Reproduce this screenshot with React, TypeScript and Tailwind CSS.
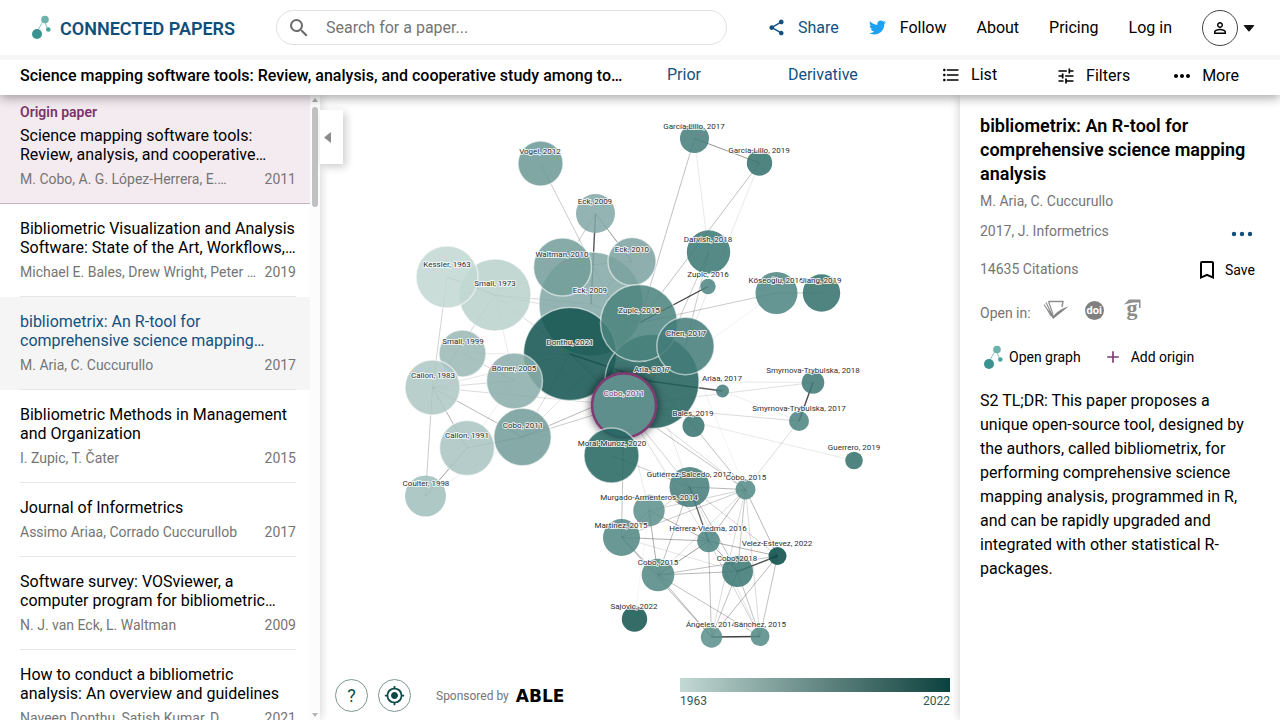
import React from "react";
import {
  MdSearch,
  MdShare,
  MdPersonOutline,
  MdFormatListBulleted,
  MdTune,
  MdMoreHoriz,
  MdBookmarkBorder,
  MdMyLocation,
  MdAdd,
} from "react-icons/md";
import { FaTwitter } from "react-icons/fa";

type Paper = { title: string; authors: string; year: number; hovered?: boolean };

const papers: Paper[] = [
  {
    title: "Bibliometric Visualization and Analysis Software: State of the Art, Workflows,…",
    authors: "Michael E. Bales, Drew Wright, Peter …",
    year: 2019,
  },
  {
    title: "bibliometrix: An R-tool for comprehensive science mapping…",
    authors: "M. Aria, C. Cuccurullo",
    year: 2017,
    hovered: true,
  },
  { title: "Bibliometric Methods in Management and Organization", authors: "I. Zupic, T. Čater", year: 2015 },
  { title: "Journal of Informetrics", authors: "Assimo Ariaa, Corrado Cuccurullob", year: 2017 },
  {
    title: "Software survey: VOSviewer, a computer program for bibliometric…",
    authors: "N. J. van Eck, L. Waltman",
    year: 2009,
  },
  {
    title: "How to conduct a bibliometric analysis: An overview and guidelines",
    authors: "Naveen Donthu, Satish Kumar, D…",
    year: 2021,
  },
];

type Node = {
  id: string;
  label: string;
  x: number;
  y: number;
  r: number;
  fill: string;
  lx: number;
  ly: number;
  origin?: boolean;
};

const nodes: Node[] = [
  { id: "small73", label: "Small, 1973", x: 495, y: 295, r: 36, fill: "#b9d0cc", lx: 495, ly: 286 },
  { id: "kessler", label: "Kessler, 1963", x: 447, y: 277, r: 31, fill: "#c1d7d3", lx: 447, ly: 267 },
  { id: "eckBig", label: "Eck, 2009", x: 591, y: 304, r: 52, fill: "#82a8a6", lx: 590, ly: 293 },
  { id: "eck09", label: "Eck, 2009", x: 595.5, y: 213.5, r: 19.5, fill: "#82a8a6", lx: 595, ly: 204 },
  { id: "waltman", label: "Waltman, 2010", x: 562.5, y: 267, r: 29, fill: "#729d9a", lx: 562, ly: 257 },
  { id: "eck10", label: "Eck, 2010", x: 632, y: 261.5, r: 24, fill: "#7ba29f", lx: 632, ly: 252 },
  { id: "vogel", label: "Vogel, 2012", x: 540.5, y: 163.5, r: 22.5, fill: "#6b9895", lx: 540, ly: 154 },
  { id: "gl17", label: "García-Lillo, 2017", x: 694.5, y: 138.5, r: 14.5, fill: "#437d79", lx: 694, ly: 129 },
  { id: "gl19", label: "García-Lillo, 2019", x: 759.5, y: 163, r: 12.7, fill: "#32706c", lx: 759, ly: 153 },
  { id: "darvish", label: "Darvish, 2018", x: 708.5, y: 252, r: 21.7, fill: "#3a7773", lx: 708, ly: 242 },
  { id: "zupic16", label: "Zupic, 2016", x: 708, y: 286.5, r: 7.7, fill: "#4c8581", lx: 708, ly: 277 },
  { id: "koseoglu", label: "Köseoğlu, 2016", x: 776.5, y: 293, r: 21, fill: "#4c8581", lx: 776, ly: 283 },
  { id: "jiang", label: "Jiang, 2019", x: 821.5, y: 293, r: 18.7, fill: "#32706c", lx: 821, ly: 283 },
  { id: "donthu", label: "Donthu, 2021", x: 570, y: 354, r: 46.5, fill: "#11534f", lx: 570, ly: 345 },
  { id: "aria", label: "Aria, 2017", x: 652, y: 381.5, r: 47, fill: "#1f605b", lx: 652, ly: 372 },
  { id: "zupic15", label: "Zupic, 2015", x: 639, y: 323, r: 38.5, fill: "#4a827e", lx: 639, ly: 313 },
  { id: "chen", label: "Chen, 2017", x: 685.5, y: 346, r: 28.7, fill: "#427c78", lx: 686, ly: 336 },
  { id: "small99", label: "Small, 1999", x: 462.5, y: 353.5, r: 23.5, fill: "#98b8b5", lx: 463, ly: 344 },
  { id: "callon83", label: "Callon, 1983", x: 432.5, y: 387.5, r: 27.5, fill: "#adc7c4", lx: 433, ly: 378 },
  { id: "borner", label: "Börner, 2005", x: 514.5, y: 381, r: 28, fill: "#89adaa", lx: 514, ly: 371 },
  { id: "cobo11", label: "Cobo, 2011", x: 522.5, y: 437, r: 28.7, fill: "#719c99", lx: 523, ly: 428 },
  { id: "callon91", label: "Callon, 1991", x: 467, y: 448, r: 27.5, fill: "#a9c4c1", lx: 467, ly: 438 },
  { id: "coulter", label: "Coulter, 1998", x: 425.5, y: 496, r: 20.5, fill: "#a1bfbc", lx: 426, ly: 486 },
  { id: "origin", label: "Cobo, 2011", x: 624, y: 405.5, r: 32, fill: "#5f8f8c", lx: 624, ly: 396, origin: true },
  { id: "moral", label: "Moral-Munoz, 2020", x: 611.5, y: 455.5, r: 27.5, fill: "#23645f", lx: 612, ly: 446 },
  { id: "ariaa", label: "Ariaa, 2017", x: 722.5, y: 391, r: 6.5, fill: "#437d79", lx: 722, ly: 381 },
  { id: "smyr18", label: "Smyrnova-Trybulska, 2018", x: 813, y: 382.5, r: 11.3, fill: "#3d7874", lx: 813, ly: 373 },
  { id: "smyr17", label: "Smyrnova-Trybulska, 2017", x: 799, y: 421, r: 10, fill: "#4a827e", lx: 799, ly: 411 },
  { id: "bales", label: "Bales, 2019", x: 693.5, y: 426, r: 11, fill: "#35726e", lx: 693, ly: 416 },
  { id: "guerrero", label: "Guerrero, 2019", x: 854, y: 460.5, r: 8.8, fill: "#32706c", lx: 854, ly: 450 },
  { id: "gutierrez", label: "Gutiérrez-Salcedo, 2017", x: 689.5, y: 487, r: 20, fill: "#437d79", lx: 689, ly: 477 },
  { id: "cobo15", label: "Cobo, 2015", x: 745.5, y: 489.5, r: 10, fill: "#548a86", lx: 746, ly: 480 },
  { id: "murgado", label: "Murgado-Armenteros, 2014", x: 649, y: 510.5, r: 15.7, fill: "#5b8f8b", lx: 649, ly: 500 },
  { id: "martinez", label: "Martínez, 2015", x: 621.5, y: 537.5, r: 18.5, fill: "#528884", lx: 621, ly: 528 },
  { id: "herrera", label: "Herrera-Viedma, 2016", x: 708.5, y: 541, r: 11.3, fill: "#4c8581", lx: 708, ly: 531 },
  { id: "cobo18", label: "Cobo, 2018", x: 737.5, y: 571.5, r: 15.5, fill: "#3a7773", lx: 737, ly: 561 },
  { id: "velez", label: "Velez-Estevez, 2022", x: 777.5, y: 556, r: 9, fill: "#074a46", lx: 777, ly: 546 },
  { id: "cobo15b", label: "Cobo, 2015", x: 658, y: 575, r: 16.3, fill: "#528884", lx: 658, ly: 565 },
  { id: "angeles", label: "Ángeles, 2014", x: 711.5, y: 637, r: 10.7, fill: "#5b8f8b", lx: 711, ly: 627 },
  { id: "sanchez", label: "Sánchez, 2015", x: 760, y: 636.5, r: 9.5, fill: "#548a86", lx: 760, ly: 627 },
  { id: "sajovic", label: "Sajovic, 2022", x: 634.5, y: 619, r: 12.7, fill: "#14544f", lx: 634, ly: 609 },
];

const byId: Record<string, Node> = Object.fromEntries(nodes.map((n) => [n.id, n]));

// [source, target, similarity between 0 and 1]
const edges: [string, string, number][] = [
  ["vogel", "aria", 0.3],
  ["eck09", "eckBig", 0.85],
  ["eck09", "eck10", 0.6],
  ["eck09", "waltman", 0.3],
  ["waltman", "eck10", 0.4],
  ["eckBig", "eck10", 0.3],
  ["eckBig", "zupic15", 0.4],
  ["kessler", "small73", 0.5],
  ["kessler", "callon83", 0.25],
  ["small73", "callon83", 0.25],
  ["small73", "eckBig", 0.25],
  ["small73", "zupic15", 0.2],
  ["small73", "borner", 0.12],
  ["small73", "donthu", 0.2],
  ["small99", "borner", 0.25],
  ["small99", "donthu", 0.12],
  ["callon83", "borner", 0.2],
  ["callon83", "origin", 0.2],
  ["callon83", "cobo11", 0.4],
  ["callon83", "callon91", 0.45],
  ["callon83", "coulter", 0.3],
  ["callon83", "donthu", 0.15],
  ["callon91", "coulter", 0.55],
  ["callon91", "cobo11", 0.4],
  ["coulter", "cobo11", 0.1],
  ["callon91", "borner", 0.1],
  ["cobo11", "aria", 0.4],
  ["cobo11", "origin", 0.3],
  ["cobo11", "donthu", 0.2],
  ["cobo11", "zupic15", 0.15],
  ["donthu", "aria", 0.8],
  ["donthu", "origin", 0.4],
  ["gl17", "gl19", 0.6],
  ["gl17", "zupic15", 0.35],
  ["gl17", "darvish", 0.12],
  ["gl19", "zupic15", 0.35],
  ["gl19", "chen", 0.12],
  ["darvish", "chen", 0.3],
  ["darvish", "aria", 0.3],
  ["zupic16", "zupic15", 0.95],
  ["koseoglu", "zupic15", 0.3],
  ["koseoglu", "jiang", 0.3],
  ["koseoglu", "aria", 0.08],
  ["aria", "ariaa", 0.85],
  ["aria", "smyr18", 0.12],
  ["origin", "smyr18", 0.18],
  ["ariaa", "smyr17", 0.1],
  ["origin", "smyr17", 0.2],
  ["smyr18", "smyr17", 0.9],
  ["smyr17", "cobo15", 0.2],
  ["origin", "guerrero", 0.12],
  ["aria", "bales", 0.25],
  ["bales", "cobo15", 0.35],
  ["chen", "cobo15", 0.07],
  ["origin", "cobo15", 0.35],
  ["donthu", "cobo15", 0.2],
  ["origin", "gutierrez", 0.25],
  ["aria", "gutierrez", 0.12],
  ["moral", "gutierrez", 0.3],
  ["origin", "martinez", 0.35],
  ["origin", "murgado", 0.12],
  ["origin", "herrera", 0.2],
  ["gutierrez", "cobo15", 0.4],
  ["gutierrez", "herrera", 0.75],
  ["gutierrez", "martinez", 0.25],
  ["gutierrez", "cobo15b", 0.35],
  ["gutierrez", "velez", 0.25],
  ["gutierrez", "cobo18", 0.35],
  ["gutierrez", "sanchez", 0.15],
  ["cobo15", "murgado", 0.25],
  ["cobo15", "martinez", 0.3],
  ["cobo15", "herrera", 0.4],
  ["cobo15", "cobo18", 0.35],
  ["cobo15", "velez", 0.4],
  ["cobo15", "cobo15b", 0.2],
  ["cobo15", "angeles", 0.2],
  ["cobo15", "sanchez", 0.2],
  ["murgado", "herrera", 0.45],
  ["murgado", "martinez", 0.4],
  ["murgado", "cobo15b", 0.45],
  ["martinez", "herrera", 0.45],
  ["martinez", "cobo18", 0.15],
  ["martinez", "cobo15b", 0.45],
  ["martinez", "angeles", 0.4],
  ["herrera", "cobo15b", 0.55],
  ["herrera", "cobo18", 0.45],
  ["herrera", "velez", 0.45],
  ["herrera", "angeles", 0.35],
  ["herrera", "sanchez", 0.25],
  ["cobo18", "velez", 0.85],
  ["cobo18", "cobo15b", 0.4],
  ["cobo18", "angeles", 0.35],
  ["cobo18", "sanchez", 0.35],
  ["velez", "cobo15b", 0.35],
  ["velez", "angeles", 0.4],
  ["velez", "sanchez", 0.35],
  ["cobo15b", "angeles", 0.4],
  ["cobo15b", "sanchez", 0.35],
  ["angeles", "sanchez", 0.95],
  ["murgado", "sajovic", 0.06],
];

function GraphLogo() {
  return (
    <svg viewBox="0 0 20 25" className="h-[25px] w-5 shrink-0" aria-hidden="true">
      <path d="M5 18.500 13 4.500 17 15" fill="none" stroke="#6fb3ae" strokeWidth="0.8" />
      <circle cx="6" cy="19" r="5" fill="#3a9391" />
      <circle cx="14" cy="4.500" r="3.800" fill="#6bb3ac" />
      <circle cx="17.300" cy="14.500" r="2.300" fill="#4aa39e" />
    </svg>
  );
}

function Header() {
  return (
    <header className="relative z-30 flex h-[55px] shrink-0 items-center bg-white shadow-[0_5px_0_#f6f6f6]">
      <a href="#home" className="ml-[31px] flex items-center gap-[9px] text-lg font-semibold text-[#0f4f7a]">
        <GraphLogo />
        <span className="whitespace-nowrap pt-0.5">CONNECTED PAPERS</span>
      </a>
      <label className="ml-[41px] flex h-[35px] flex-1 items-center gap-[15px] rounded-full border border-[#e0e0e0] px-2.5">
        <MdSearch className="size-6 shrink-0 text-[#6b6b6b]" />
        <input
          type="search"
          aria-label="Search for a paper"
          placeholder="Search for a paper..."
          className="w-full bg-transparent text-base outline-none placeholder:text-[#757575]"
        />
      </label>
      <nav className="ml-10 flex items-center gap-[30px] text-base">
        <a href="#share" className="flex items-center gap-3 text-[#125180]">
          <MdShare className="size-[19px]" />
          Share
        </a>
        <a href="#follow" className="flex items-center gap-3.5">
          <FaTwitter className="size-[17px] text-[#1da1f2]" />
          Follow
        </a>
        <a href="#about">About</a>
        <a href="#pricing">Pricing</a>
        <a href="#login" className="whitespace-nowrap">Log in</a>
        <button type="button" aria-label="Account" className="mr-[25px] flex items-center gap-[5px]">
          <span className="flex size-9 items-center justify-center rounded-full border border-[#444]">
            <MdPersonOutline className="size-[18px]" />
          </span>
          <svg viewBox="0 0 12 7" className="mt-0.5 h-[7px] w-3" aria-hidden="true">
            <path d="M1.200 0.500h9.600l-4.800 5.800z" fill="#111" stroke="#111" strokeLinejoin="round" />
          </svg>
        </button>
      </nav>
    </header>
  );
}

function Toolbar() {
  return (
    <div className="relative z-20 flex h-10 shrink-0 items-center bg-white px-5 text-base shadow-[0_3px_10px_rgba(0,0,0,0.35)]">
      <h1 className="w-[605px] truncate pt-0.5 font-medium">
        Science mapping software tools: Review, analysis, and cooperative study among to…
      </h1>
      <div className="ml-[42px] flex flex-1 gap-[87px] text-[#125180]">
        <button type="button">Prior</button>
        <button type="button">Derivative</button>
      </div>
      <div className="flex items-center">
        <button type="button" className="flex items-center gap-2.5">
          <MdFormatListBulleted className="size-5" />
          List
        </button>
        <button type="button" className="ml-[59px] flex items-center gap-2.5 pt-0.5">
          <MdTune className="size-5" />
          Filters
        </button>
        <button type="button" className="mr-[21px] ml-10 flex items-center gap-2 pt-0.5">
          <MdMoreHoriz className="size-6" />
          More
        </button>
      </div>
    </div>
  );
}

function Byline({ authors, year }: { authors: string; year: number }) {
  return (
    <div className="mt-[5px] flex justify-between text-sm text-[#757575]">
      <span className="truncate">{authors}</span>
      <span>{year}</span>
    </div>
  );
}

function PaperList() {
  return (
    <aside className="relative z-10 flex w-80 shrink-0 bg-white shadow-[0_0_10px_rgba(0,0,0,0.2)]">
      <ul className="w-[310px] overflow-hidden">
        <li className="border-b border-[#c9b4c1] bg-[#f3ebf0] pt-[7px] pr-3.5 pb-3.5 pl-5">
          <p className="text-sm font-semibold text-[#7a3568]">Origin paper</p>
          <h2 className="mt-1 text-base leading-[19px]">
            Science mapping software tools: Review, analysis, and cooperative…
          </h2>
          <Byline authors="M. Cobo, A. G. López-Herrera, E.…" year={2011} />
        </li>
        {papers.map((p) => (
          <li key={p.title} className={p.hovered ? "bg-[#f5f5f5] pr-3.5 pl-5" : "pr-3.5 pl-5"}>
            <div className="border-b border-[#e6e6e6] pt-[15px] pb-3.5">
              <h2 className={p.hovered ? "text-base leading-[19px] text-[#125180]" : "text-base leading-[19px]"}>
                {p.title}
              </h2>
              <Byline authors={p.authors} year={p.year} />
            </div>
          </li>
        ))}
      </ul>
      <div className="flex w-2.5 flex-col items-center justify-between bg-[#fcfcfc] py-[3px]" aria-hidden="true">
        <div className="flex flex-col items-center gap-[5px]">
          <svg viewBox="0 0 6 4" className="h-1 w-1.5">
            <path d="M0 4 3 0l3 4z" fill="#a9a9a9" />
          </svg>
          <div className="h-[100px] w-1.5 rounded-full bg-[#c1c1c1]" />
        </div>
        <svg viewBox="0 0 6 4" className="h-1 w-1.5">
          <path d="M0 0h6L3 4z" fill="#b5b5b5" />
        </svg>
      </div>
      <button
        type="button"
        aria-label="Collapse list"
        className="absolute top-[15px] left-full flex h-[54px] w-[23px] items-center bg-white pl-1 shadow-[3px_3px_8px_rgba(0,0,0,0.2)]"
      >
        <svg viewBox="0 0 7 11" className="h-[11px] w-[7px]" aria-hidden="true">
          <path d="M7 0v11L0 5.500z" fill="#8a8a8a" />
        </svg>
      </button>
    </aside>
  );
}

function Graph() {
  return (
    <svg viewBox="320 95 640 575" className="min-h-0 w-full flex-1" role="img" aria-label="Graph of related papers">
      <defs>
        <filter id="glow" x="-30%" y="-30%" width="160%" height="160%">
          <feDropShadow dx="0" dy="0" stdDeviation="5" floodColor="#000" floodOpacity="0.7" />
        </filter>
      </defs>
      {edges.map(([a, b, w]) => (
        <line
          key={a + b}
          x1={byId[a].x}
          y1={byId[a].y}
          x2={byId[b].x}
          y2={byId[b].y}
          stroke="#222"
          strokeOpacity={w * 0.9}
          strokeWidth={w > 0.7 ? 1.4 : 0.9}
        />
      ))}
      {nodes.map((n) => (
        <circle
          key={n.id}
          cx={n.x}
          cy={n.y}
          r={n.r}
          fill={n.fill}
          fillOpacity={n.origin ? 1 : 0.86}
          stroke={n.origin ? "#7f3b72" : "#fff"}
          strokeOpacity={n.origin ? 1 : 0.55}
          strokeWidth={n.origin ? 2.5 : n.r > 22 ? 1.5 : 0}
          filter={n.origin ? "url(#glow)" : undefined}
        />
      ))}
      {nodes.map((n) => (
        <text
          key={n.id}
          x={n.lx}
          y={n.ly}
          textAnchor="middle"
          className="text-[8px]"
          fill={n.origin ? "#7f3b72" : "#2f2f2f"}
          stroke="#fff"
          strokeOpacity={0.8}
          strokeWidth={2}
          strokeLinejoin="round"
          paintOrder="stroke"
        >
          {n.label}
        </text>
      ))}
    </svg>
  );
}

function GraphPane() {
  return (
    <main className="flex min-w-0 flex-1 flex-col bg-white">
      <Graph />
      <div className="flex h-[50px] shrink-0 items-start justify-between pr-2.5 pl-[15px]">
        <div className="flex items-center pt-[9px] text-[#0d4a47]">
          <button
            type="button"
            className="flex size-[33px] items-center justify-center rounded-full border border-[#7d9694] text-lg"
          >
            ?
          </button>
          <button
            type="button"
            aria-label="Center graph"
            className="ml-2.5 flex size-[33px] items-center justify-center rounded-full border border-[#7d9694]"
          >
            <MdMyLocation className="size-[21px]" />
          </button>
          <span className="ml-[25px] text-xs text-[#757575]">Sponsored by</span>
          <a
            href="#sponsor"
            className="ml-[7px] font-['DejaVu_Sans',sans-serif] text-[17px] leading-6 font-bold text-black"
          >
            ABLE
          </a>
        </div>
        <div className="w-[270px] pt-2 text-xs text-[#2c5a57]">
          <div className="h-3.5 bg-linear-to-r from-[#c3d9d4] to-[#07423f]" />
          <div className="flex justify-between pt-px">
            <span>1963</span>
            <span>2022</span>
          </div>
        </div>
      </div>
    </main>
  );
}

function DetailPane() {
  return (
    <section className="relative z-10 w-80 shrink-0 bg-white px-5 pt-[19px] shadow-[0_0_10px_rgba(0,0,0,0.2)]">
      <h2 className="text-lg leading-6 font-semibold">
        bibliometrix: An R-tool for comprehensive science mapping analysis
      </h2>
      <p className="mt-[5px] text-sm text-[#757575]">M. Aria, C. Cuccurullo</p>
      <div className="mt-2.5 flex items-center justify-between text-sm text-[#757575]">
        <p>2017, J. Informetrics</p>
        <button type="button" aria-label="More actions" className="mr-1.5 pt-1.5 text-[#0f4f7a]">
          <svg viewBox="0 0 24 6" className="h-1.5 w-6" fill="currentColor" aria-hidden="true">
            <circle cx="4" cy="3" r="2.200" />
            <circle cx="12" cy="3" r="2.200" />
            <circle cx="20" cy="3" r="2.200" />
          </svg>
        </button>
      </div>
      <div className="mt-[15px] flex items-center justify-between text-sm">
        <p className="text-[#757575]">14635 Citations</p>
        <button type="button" className="mr-[5px] flex items-center gap-1.5 pt-0.5">
          <MdBookmarkBorder className="size-6" />
          Save
        </button>
      </div>
      <div className="mt-3 flex h-8 items-center text-sm text-[#757575]">
        <span className="pt-1.5">Open in:</span>
        <a href="#semantic-scholar" aria-label="Semantic Scholar" className="ml-3">
          <svg viewBox="0 0 26 20" className="h-5 w-[26px]" fill="none" stroke="#8f8f8f">
            <path d="M5.500 1.500H20l-1 5.500" strokeWidth="1.400" />
            <path d="M1 4.500 4 9l4 7M3 2.500l3 6 3 7M5.500 1.500l2.500 7 2 6" strokeWidth="1.200" />
            <path d="M4 8.500 10 19 25.500 6.500C19 8.500 15 11 10.500 15.500z" fill="#858585" stroke="none" />
          </svg>
        </a>
        <a
          href="#doi"
          className="ml-4 flex size-[19px] items-center justify-center rounded-full bg-[#808080] text-[11px] leading-none font-bold text-white"
        >
          doi
        </a>
        <a href="#google-scholar" aria-label="Google Scholar" className="ml-[19px]">
          <svg viewBox="0 -3 20 30" className="h-[30px] w-5">
            <text
              x="9"
              y="17"
              textAnchor="middle"
              className="font-['Liberation_Serif',serif] text-[22px] font-bold"
              fill="#8a8a8a"
            >
              g
            </text>
            <path d="M6 1.500h11.500V10h-1.500V4.500H10L1 6.500z" fill="#909090" />
          </svg>
        </a>
      </div>
      <div className="mt-[17px] flex h-7 items-center text-sm">
        <button type="button" className="ml-[3px] flex items-center gap-1.5">
          <GraphLogo />
          Open graph
        </button>
        <button type="button" className="ml-[22px] flex items-center gap-2">
          <MdAdd className="size-5 text-[#7f3b72]" />
          Add origin
        </button>
      </div>
      <p className="mt-[18px] text-base leading-6">
        S2 TL;DR: This paper proposes a unique open-source tool, designed by the authors, called bibliometrix, for
        performing comprehensive science mapping analysis, programmed in R, and can be rapidly upgraded and integrated
        with other statistical R-packages.
      </p>
    </section>
  );
}

export default function App() {
  return (
    <div className="flex h-screen flex-col overflow-hidden bg-white font-['Roboto',sans-serif] text-black">
      <Header />
      <Toolbar />
      <div className="flex min-h-0 flex-1">
        <PaperList />
        <GraphPane />
        <DetailPane />
      </div>
    </div>
  );
}
